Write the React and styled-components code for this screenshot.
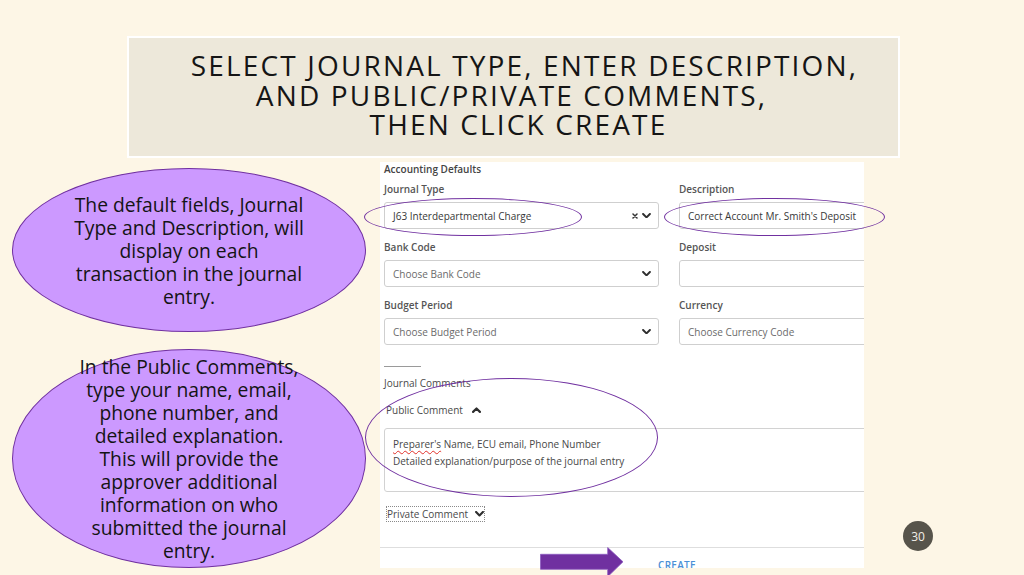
import React from "react";
import styled, { createGlobalStyle } from "styled-components";

const Global = createGlobalStyle`
  html, body { margin: 0; padding: 0; background: #fdf6e6; }
  body { font-family: "Open Sans", "Noto Sans", sans-serif; }
`;

const Slide = styled.div`
  position: relative;
  width: 1024px;
  height: 575px;
  overflow: hidden;
  background: #fdf6e6;
`;

const TitleBox = styled.header`
  box-sizing: border-box;
  margin: 36px 0 0 127px;
  width: 773px;
  height: 122px;
  border: 2px solid #ffffff;
  background: #ede8da;
  padding-top: 13px;
  text-align: center;
`;

const TitleLine = styled.div`
  font-size: 28px;
  line-height: 29.5px;
  letter-spacing: 2.15px;
  color: #151515;
  white-space: nowrap;
  padding-left: ${(p) => (p.$shift > 0 ? p.$shift * 2 : 0)}px;
  padding-right: ${(p) => (p.$shift < 0 ? -p.$shift * 2 : 0)}px;
`;

const Body = styled.div`
  display: flex;
  margin-top: 4px;
`;

const Notes = styled.div`
  box-sizing: border-box;
  width: 380px;
  flex-shrink: 0;
  display: flex;
  flex-direction: column;
  gap: 17px;
  padding: 6px 0 0 12px;
`;

const Bubble = styled.div`
  box-sizing: border-box;
  width: 354px;
  height: ${(p) => p.$h}px;
  border-radius: 50%;
  background: #cc99ff;
  border: 1px solid #7030a0;
  display: flex;
  align-items: center;
  justify-content: center;
  text-align: center;
  font-size: 19.3px;
  line-height: 23px;
  color: #141414;
  white-space: nowrap;
`;

const Panel = styled.section`
  box-sizing: border-box;
  width: 484px;
  height: 406px;
  background: #ffffff;
  overflow: hidden;
  padding-left: 4px;
  display: flex;
  flex-direction: column;
  color: #444;

  & > * {
    flex-shrink: 0;
  }
`;

const Heading = styled.div`
  font-size: 10px;
  font-weight: 600;
  line-height: 14px;
  color: #444;
  white-space: nowrap;
`;

const FieldGrid = styled.div`
  display: grid;
  grid-template-columns: 275px 275px;
  column-gap: 20px;
  row-gap: 11px;
  width: 570px;
  margin-top: 6px;
`;

const Field = styled.div`
  display: flex;
  flex-direction: column;
`;

const Label = styled.div`
  font-size: 10px;
  font-weight: 600;
  line-height: 14px;
  color: #555;
  margin-bottom: 6px;
  white-space: nowrap;
`;

const Control = styled.div`
  box-sizing: border-box;
  height: 27px;
  border: 1px solid #cfcfcf;
  border-radius: 3px;
  display: flex;
  align-items: center;
  padding: 0 7px 0 8px;
  font-size: 10px;
  color: ${(p) => (p.$placeholder ? "#6b6b6b" : "#383838")};
  background: #fff;
  white-space: nowrap;
`;

const ControlText = styled.span`
  flex: 1;
`;

const Icons = styled.span`
  display: flex;
  align-items: center;
  gap: 4px;
`;

const Rule = styled.div`
  width: 37px;
  height: 1px;
  background: #9a9a9a;
  margin-top: 21px;
`;

const SubLabel = styled.div`
  font-size: 10px;
  line-height: 14px;
  color: #4a4a4a;
  margin-top: ${(p) => p.$mt}px;
  margin-left: ${(p) => p.$ml || 0}px;
  display: flex;
  align-items: center;
  gap: 9px;
  white-space: nowrap;
`;

const CommentBox = styled.div`
  box-sizing: border-box;
  width: 560px;
  height: 64px;
  margin-top: 11px;
  border: 1px solid #d2d2d2;
  border-radius: 3px;
  padding: 7px 8px 0;
  font-size: 10px;
  line-height: 17px;
  color: #474747;
  white-space: nowrap;
`;

const Misspelled = styled.span`
  text-decoration: underline wavy #e0302a;
  text-decoration-thickness: 1px;
  text-underline-offset: 2px;
  text-decoration-skip-ink: none;
`;

const Toggle = styled.div`
  box-sizing: border-box;
  align-self: flex-start;
  width: 99px;
  height: 16px;
  margin: 14px 0 0 2px;
  border: 1px dotted #8a8a8a;
  display: flex;
  align-items: center;
  gap: 7px;
  font-size: 10px;
  color: #4a4a4a;
  white-space: nowrap;

  & > svg {
    flex-shrink: 0;
  }
`;

const Divider = styled.div`
  width: 484px;
  height: 1px;
  margin: 25px 0 0 -4px;
  background: #dedede;
`;

const CreateLink = styled.div`
  margin: 10px 0 0 274px;
  font-size: 10px;
  line-height: 14px;
  font-weight: 600;
  letter-spacing: 0.3px;
  color: #4a8fd6;
`;

const Callout = styled.div`
  position: absolute;
  box-sizing: border-box;
  left: ${(p) => p.$x}px;
  top: ${(p) => p.$y}px;
  width: ${(p) => p.$w}px;
  height: ${(p) => p.$h}px;
  border: 1.5px solid #7030a0;
  border-radius: 50%;
  pointer-events: none;
`;

const Arrow = styled.svg`
  position: absolute;
  left: 540px;
  top: 547px;
`;

const PageBadge = styled.div`
  position: absolute;
  left: 903px;
  top: 521px;
  width: 30px;
  height: 30px;
  border-radius: 50%;
  background: #57544b;
  color: #f2efe8;
  font-size: 12px;
  display: flex;
  align-items: center;
  justify-content: center;
`;

const Chevron = ({ up, size = 9, weight = 2 }) => (
  <svg width={size} height={size * 0.65} viewBox="0 0 9 6" fill="none">
    <polyline
      points={up ? "1,5 4.5,1.5 8,5" : "1,1 4.5,4.5 8,1"}
      stroke="#2e2e2e"
      strokeWidth={weight}
      strokeLinecap="round"
      strokeLinejoin="round"
    />
  </svg>
);

const Clear = () => (
  <svg width="6" height="6" viewBox="0 0 6 6">
    <path d="M1 1 L5 5 M5 1 L1 5" stroke="#333" strokeWidth="1.5" strokeLinecap="round" />
  </svg>
);

export default function App() {
  return (
    <>
      <Global />
      <Slide>
        <TitleBox>
          <TitleLine $shift={11}>SELECT JOURNAL TYPE, ENTER DESCRIPTION,</TitleLine>
          <TitleLine $shift={-2}>AND PUBLIC/PRIVATE COMMENTS,</TitleLine>
          <TitleLine $shift={5}>THEN CLICK CREATE</TitleLine>
        </TitleBox>

        <Body>
          <Notes>
            <Bubble $h={164}>
              <div>
                The default fields, Journal
                <br />
                Type and Description, will
                <br />
                display on each
                <br />
                transaction in the journal
                <br />
                entry.
              </div>
            </Bubble>
            <Bubble $h={219}>
              <div>
                In the Public Comments,
                <br />
                type your name, email,
                <br />
                phone number, and
                <br />
                detailed explanation.
                <br />
                This will provide the
                <br />
                approver additional
                <br />
                information on who
                <br />
                submitted the journal
                <br />
                entry.
              </div>
            </Bubble>
          </Notes>

          <Panel>
            <Heading>Accounting Defaults</Heading>
            <FieldGrid>
              <Field>
                <Label>Journal Type</Label>
                <Control>
                  <ControlText>J63 Interdepartmental Charge</ControlText>
                  <Icons>
                    <Clear />
                    <Chevron />
                  </Icons>
                </Control>
              </Field>
              <Field>
                <Label>Description</Label>
                <Control>Correct Account Mr. Smith's Deposit</Control>
              </Field>
              <Field>
                <Label>Bank Code</Label>
                <Control $placeholder>
                  <ControlText>Choose Bank Code</ControlText>
                  <Chevron />
                </Control>
              </Field>
              <Field>
                <Label>Deposit</Label>
                <Control />
              </Field>
              <Field>
                <Label>Budget Period</Label>
                <Control $placeholder>
                  <ControlText>Choose Budget Period</ControlText>
                  <Chevron />
                </Control>
              </Field>
              <Field>
                <Label>Currency</Label>
                <Control $placeholder>Choose Currency Code</Control>
              </Field>
            </FieldGrid>

            <Rule />
            <SubLabel $mt={9}>Journal Comments</SubLabel>
            <SubLabel $mt={13} $ml={2}>
              Public Comment
              <Chevron up size={9} weight={2.2} />
            </SubLabel>
            <CommentBox>
              <Misspelled>Preparer's</Misspelled> Name, ECU email, Phone Number
              <br />
              Detailed explanation/purpose of the journal entry
            </CommentBox>
            <Toggle>
              Private Comment
              <Chevron size={9} weight={2.2} />
            </Toggle>
            <Divider />
            <CreateLink>CREATE</CreateLink>
          </Panel>
        </Body>

        <Callout $x={364} $y={198} $w={218} $h={38} />
        <Callout $x={664} $y={198} $w={221} $h={38} />
        <Callout $x={365} $y={378} $w={293} $h={119} />

        <Arrow width="86" height="32" viewBox="0 0 86 32">
          <polygon
            points="0.5,7.3 67.7,7.3 67.7,0.5 83,14.8 67.7,29.7 67.7,22.3 0.5,22.3"
            fill="#7030a0"
            stroke="#8d5cc0"
            strokeWidth="0.8"
          />
        </Arrow>

        <PageBadge>30</PageBadge>
      </Slide>
    </>
  );
}
